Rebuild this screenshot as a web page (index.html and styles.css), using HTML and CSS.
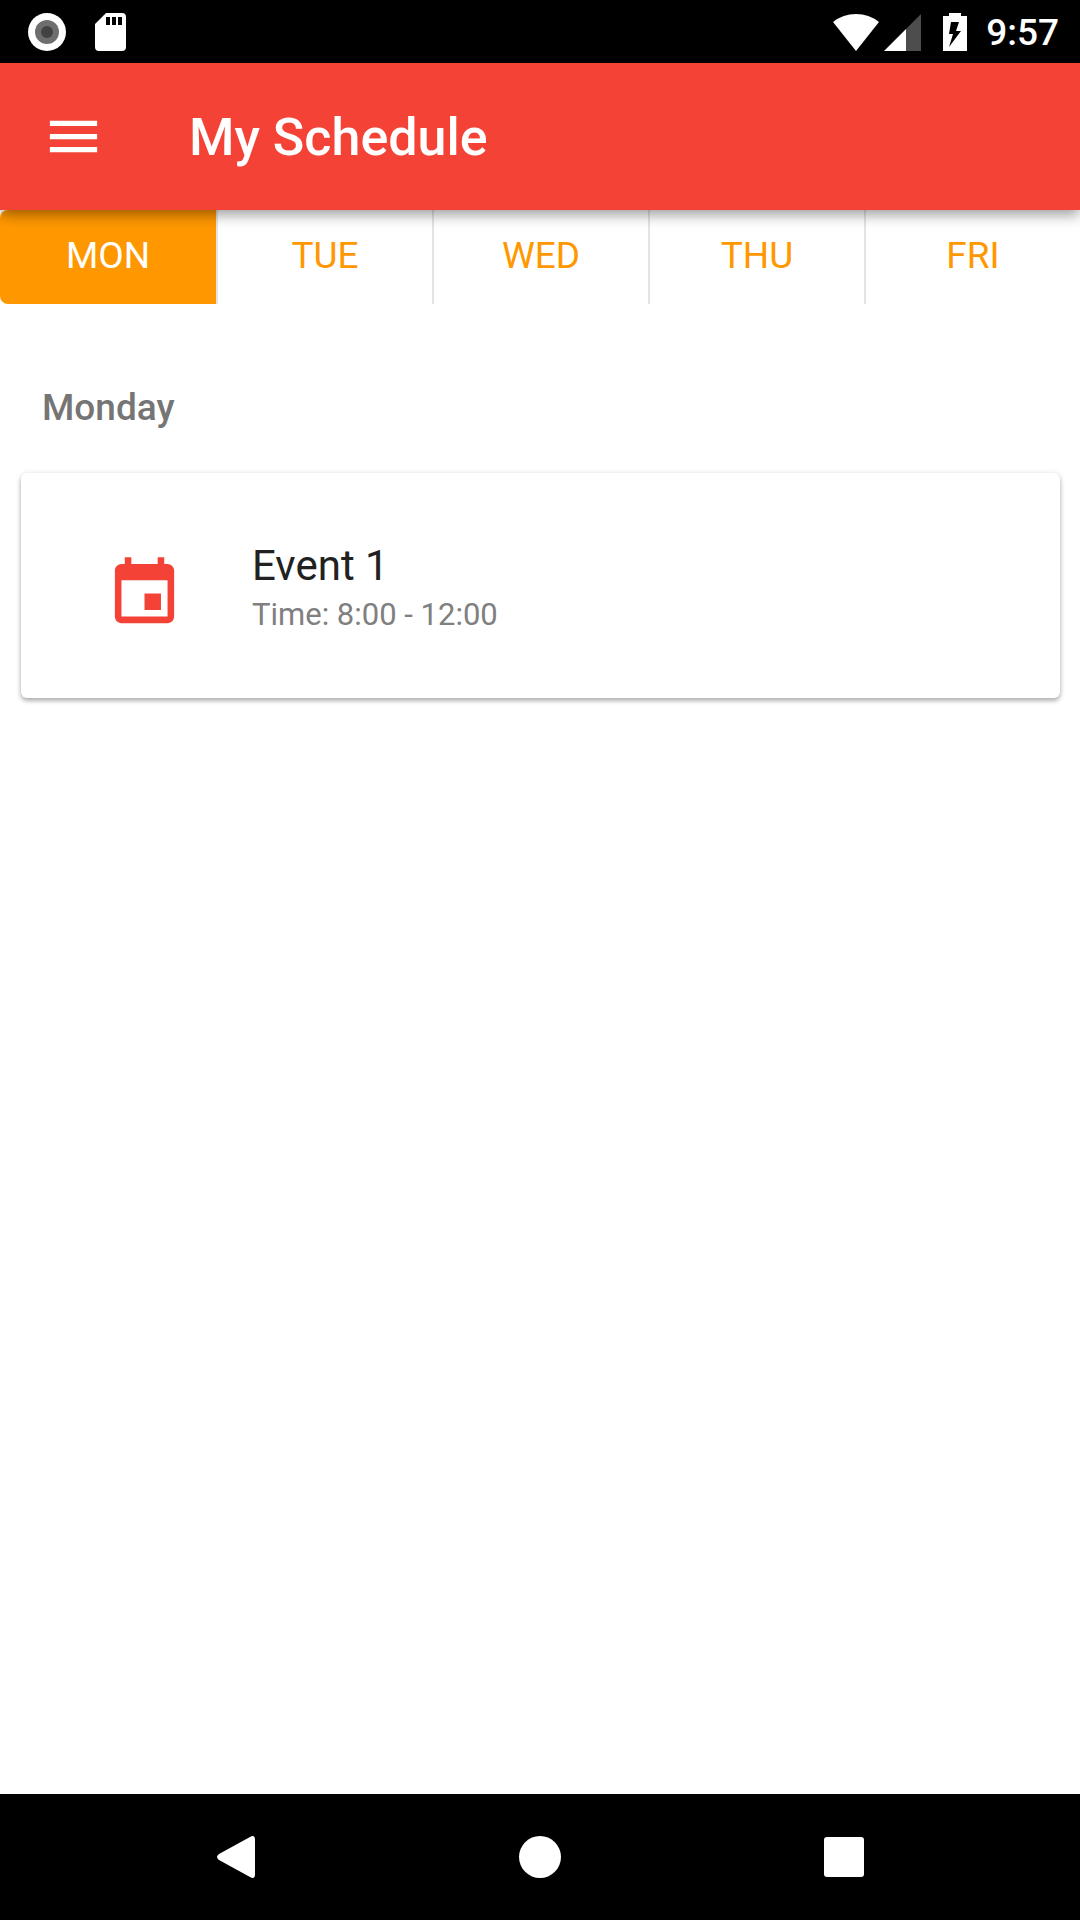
FILE: index.html
```html
<!DOCTYPE html>
<html lang="en">
<head>
<meta charset="utf-8">
<meta name="viewport" content="width=device-width, initial-scale=1">
<title>My Schedule</title>
<link rel="stylesheet" href="styles.css">
</head>
<body>
<div class="status-bar">
  <div class="status-group status-notifications">
    <svg class="status-icon" width="38" height="38" viewBox="0 0 38 38" aria-hidden="true">
      <circle cx="19" cy="19" r="19" fill="#fff"/>
      <circle cx="19" cy="19" r="12" fill="#6e6e6e"/>
      <circle cx="19" cy="19" r="6" fill="#424242"/>
    </svg>
    <svg class="status-icon" width="31" height="38" viewBox="0 0 31 38" aria-hidden="true">
      <path fill="#fff" fill-rule="evenodd" d="M11 0H27Q31 0 31 4V34Q31 38 27 38H4Q0 38 0 34V11ZM11 4V12H15V4ZM17 4V12H21V4ZM23 4V12H27V4Z"/>
    </svg>
  </div>
  <div class="status-group">
    <svg class="status-icon" width="46" height="38" viewBox="0 0 46 38" aria-hidden="true">
      <path fill="#fff" d="M0 9Q10 1 23 1T46 9L23 38Z"/>
    </svg>
    <svg class="status-icon signal" width="37" height="38" viewBox="0 0 37 38" aria-hidden="true">
      <path fill="#4d4d4d" d="M37 1V38H22V16Z"/>
      <path fill="#fff" d="M0 38L22 16V38Z"/>
    </svg>
    <svg class="status-icon battery" width="24" height="38" viewBox="0 0 24 38" aria-hidden="true">
      <path fill="#fff" fill-rule="evenodd" d="M6 0H18V3H24V38H0V3H6ZM8 9L6 21H10L6 34L18 18H13L16 9Z"/>
    </svg>
    <time class="clock">9:57</time>
  </div>
</div>

<header class="app-bar">
  <button class="menu-button" type="button" aria-label="Open menu">
    <svg width="63" height="63" viewBox="0 0 24 24" aria-hidden="true">
      <path fill="currentColor" d="M3 18h18v-2H3v2zm0-5h18v-2H3v2zm0-7v2h18V6H3z"/>
    </svg>
  </button>
  <h1 class="app-title">My Schedule</h1>
</header>

<nav class="day-tabs" aria-label="Day">
  <button class="day-tab selected" type="button" aria-pressed="true">MON</button>
  <button class="day-tab" type="button" aria-pressed="false">TUE</button>
  <button class="day-tab" type="button" aria-pressed="false">WED</button>
  <button class="day-tab" type="button" aria-pressed="false">THU</button>
  <button class="day-tab" type="button" aria-pressed="false">FRI</button>
</nav>

<main class="schedule">
  <h2 class="day-heading">Monday</h2>
  <article class="event-card">
    <svg class="event-icon" width="79" height="79" viewBox="0 0 24 24" aria-hidden="true">
      <path fill="currentColor" d="M17 12h-5v5h5v-5zM16 1v2H8V1H6v2H5c-1.110 0-1.990.9-1.990 2L3 19c0 1.100.890 2 2 2h14c1.100 0 2-.9 2-2V5c0-1.100-.9-2-2-2h-1V1h-2zm3 18H5V8h14v11z"/>
    </svg>
    <div class="event-text">
      <h3 class="event-title">Event 1</h3>
      <p class="event-time">Time: 8:00 - 12:00</p>
    </div>
  </article>
</main>

<nav class="system-nav" aria-label="System">
  <button class="system-button" type="button" aria-label="Back">
    <svg width="42" height="42" viewBox="0 0 42 42" aria-hidden="true">
      <path fill="#fff" d="M4 18L35 1Q40-2 40 4V38Q40 44 35 41L4 24Q0 21 4 18Z"/>
    </svg>
  </button>
  <button class="system-button" type="button" aria-label="Home">
    <svg width="42" height="42" viewBox="0 0 42 42" aria-hidden="true"><circle cx="21" cy="21" r="21" fill="#fff"/></svg>
  </button>
  <button class="system-button" type="button" aria-label="Recent apps">
    <svg width="42" height="42" viewBox="0 0 42 42" aria-hidden="true"><rect x="1" y="1" width="40" height="40" rx="3" fill="#fff"/></svg>
  </button>
</nav>
</body>
</html>
```
FILE: styles.css
```css
* {
  box-sizing: border-box;
}

body {
  margin: 0;
  min-height: 100vh;
  display: flex;
  flex-direction: column;
  background: #fff;
  font-family: Roboto, "Liberation Sans", sans-serif;
}

h1, h2, h3, p {
  margin: 0;
}

button {
  margin: 0;
  padding: 0;
  border: 0;
  background: none;
  font: inherit;
}

svg {
  display: block;
  flex: none;
}

.status-bar {
  display: flex;
  justify-content: space-between;
  height: 63px;
  padding: 0 21px 0 28px;
  background: #000;
  color: #fff;
}

.status-group {
  display: flex;
  align-items: center;
}

.status-notifications {
  gap: 29px;
}

.signal {
  margin-left: 5px;
}

.battery {
  margin: 0 19px 0 22px;
}

.clock {
  font-size: 37px;
  font-weight: 500;
  line-height: 42px;
  padding-top: 2px;
}

.app-bar {
  position: relative;
  z-index: 1;
  display: flex;
  align-items: center;
  gap: 84px;
  height: 147px;
  padding: 0 42px;
  background: #f44336;
  color: #fff;
  box-shadow: 0 5px 10px -3px rgba(0, 0, 0, 0.2), 0 8px 12px rgba(0, 0, 0, 0.14), 0 3px 16px rgba(0, 0, 0, 0.12);
}

.menu-button {
  color: #fff;
}

.app-title {
  padding-top: 2px;
  font-size: 52px;
  font-weight: 500;
  line-height: 64px;
}

.day-tabs {
  display: grid;
  grid-template-columns: repeat(5, 1fr);
}

.day-tab {
  height: 94px;
  padding-bottom: 2px;
  border-left: 2px solid #e4e4e4;
  color: #ff9800;
  font-size: 37px;
  line-height: 44px;
}

.day-tab.selected {
  border-left: 0;
  border-radius: 8px 0 0 8px;
  background: #ff9800;
  color: #fff;
}

.schedule {
  flex: 1;
  padding: 82px 20px 0 21px;
}

.day-heading {
  padding: 0 21px;
  color: #757575;
  font-size: 37px;
  font-weight: 500;
  line-height: 44px;
}

.event-card {
  display: flex;
  align-items: flex-end;
  gap: 68px;
  margin-top: 43px;
  padding: 65px 84px 61px;
  border-radius: 6px;
  background: #fff;
  box-shadow: 0 3px 4px rgba(0, 0, 0, 0.24), 0 1px 6px rgba(0, 0, 0, 0.14);
}

.event-icon {
  margin-bottom: 4px;
  color: #f44336;
}

.event-title {
  color: #212121;
  font-size: 42px;
  font-weight: 400;
  line-height: 55px;
}

.event-time {
  color: #808080;
  font-size: 31px;
  line-height: 44px;
}

.system-nav {
  display: flex;
  justify-content: center;
  gap: 262px;
  height: 126px;
  background: #000;
}
```
